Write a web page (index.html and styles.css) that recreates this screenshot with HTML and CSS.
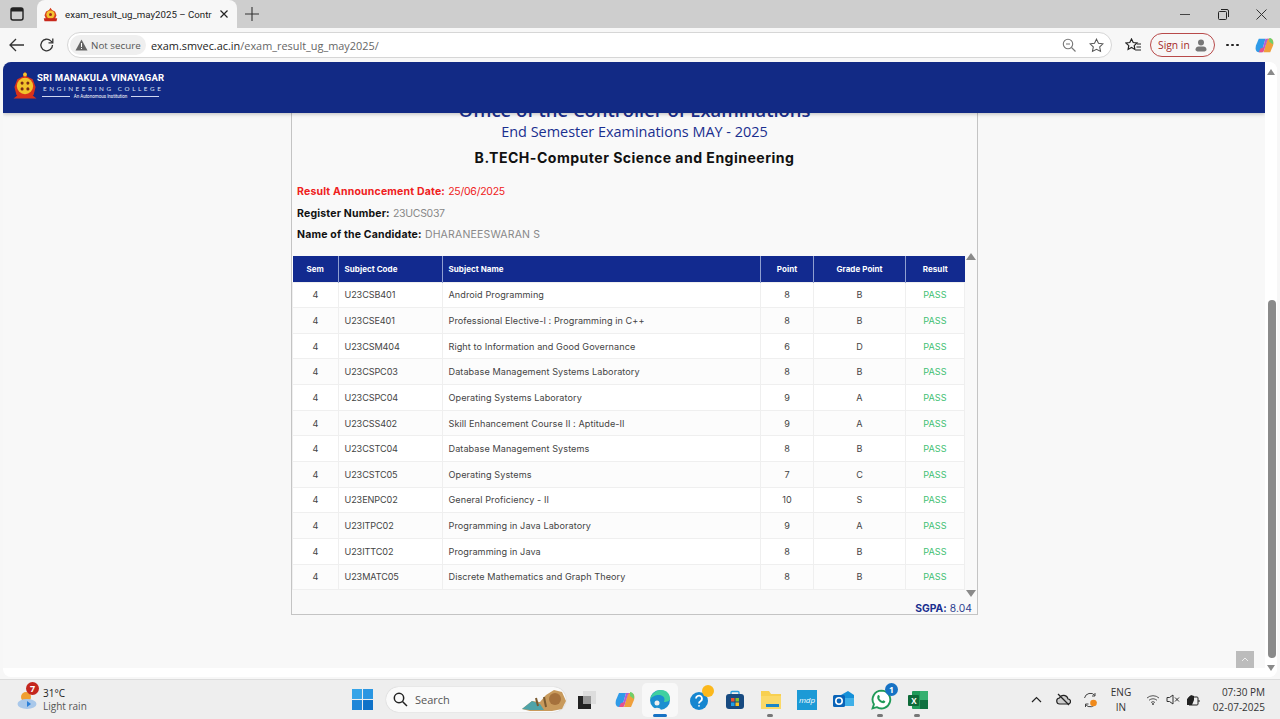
FILE: index.html
```html
<!DOCTYPE html>
<html lang="en">
<head>
<meta charset="utf-8">
<title>exam_result_ug_may2025</title>
<link rel="stylesheet" href="styles.css">
</head>
<body>
<div class="window">
  <div class="tabstrip">
    <svg class="tab-actions" width="16" height="16" viewBox="0 0 16 16"><rect x="2" y="2" width="12" height="12" rx="2" fill="none" stroke="#222" stroke-width="1.4"/><rect x="2" y="2" width="12" height="3.5" fill="#222"/></svg>
    <div class="tab">
      <svg class="favicon" width="15" height="15" viewBox="0 0 20 20"><path d="M10 1l2 3 4 2 2 5-2 5H4l-2-5 2-5 4-2z" fill="#d8401c"/><circle cx="10" cy="10" r="5.500" fill="#f4c430"/><circle cx="10" cy="10" r="2" fill="#a6281a"/><path d="M1 15h18l-1 4H2z" fill="#c8281c"/></svg>
      <span class="tab-title">exam_result_ug_may2025 – Contr</span>
      <svg width="10" height="10" viewBox="0 0 10 10"><path d="M1.500 1.500l7 7M8.500 1.500l-7 7" stroke="#222" stroke-width="1.200"/></svg>
    </div>
    <svg class="plus" width="14" height="14" viewBox="0 0 14 14"><path d="M7 0v14M0 7h14" stroke="#333" stroke-width="1.100"/></svg>
    <div class="win-controls">
      <svg width="11" height="11" viewBox="0 0 11 11"><path d="M0 5.500h10" stroke="#444"/></svg>
      <svg width="11" height="11" viewBox="0 0 11 11"><rect x=".5" y="2.500" width="8" height="8" rx="1" fill="none" stroke="#222"/><path d="M3 .5h6a1.500 1.500 0 0 1 1.500 1.500v6" fill="none" stroke="#222"/></svg>
      <svg width="11" height="11" viewBox="0 0 11 11"><path d="M.5.5l10 10M10.500.5l-10 10" stroke="#333"/></svg>
    </div>
  </div>

  <div class="toolbar">
    <svg class="nav-back" width="16" height="14" viewBox="0 0 16 14"><path d="M7 1L1 7l6 6M1 7h14" fill="none" stroke="#333" stroke-width="1.300"/></svg>
    <svg class="nav-reload" width="16" height="16" viewBox="0 0 16 16"><path d="M13.500 8a5.800 5.800 0 1 1-1.700-4.100L13.500 5.500" fill="none" stroke="#333" stroke-width="1.300"/><path d="M13.800 1.500v4.300H9.500" fill="none" stroke="#333" stroke-width="1.300"/></svg>
    <div class="omnibox">
      <div class="chip">
        <svg width="13" height="12" viewBox="0 0 13 12"><path d="M6.500.5l6 11H.5z" fill="#666"/><path d="M6.500 4v4M6.500 9v1" stroke="#fff"/></svg>
        <span>Not secure</span>
      </div>
      <div class="url"><span class="url-host">exam.smvec.ac.in</span>/exam_result_ug_may2025/</div>
      <svg class="omni-zoom" width="14" height="14" viewBox="0 0 14 14"><circle cx="6" cy="6" r="4.700" fill="none" stroke="#777" stroke-width="1.100"/><path d="M9.500 9.500l4 4M4 6h4" stroke="#777" stroke-width="1.100"/></svg>
      <svg class="omni-star" width="15" height="15" viewBox="0 0 16 16"><path d="M8 1.200l2.100 4.400 4.800.6-3.500 3.300.9 4.800L8 12l-4.300 2.300.9-4.800L1.100 6.200l4.800-.6z" fill="none" stroke="#555" stroke-width="1.100"/></svg>
    </div>
    <svg class="fav-list" width="17" height="15" viewBox="0 0 17 15"><path d="M6.500 1l1.700 3.500 3.800.5-2.800 2.600.7 3.800-3.400-1.900-3.400 1.900.7-3.800L1 5l3.800-.5z" fill="none" stroke="#222" stroke-width="1.200"/><path d="M12 6h4M11.500 9h4.500M10.500 12h5.500" stroke="#222" stroke-width="1.100"/></svg>
    <div class="signin">
      <span>Sign in</span>
      <svg width="12" height="13" viewBox="0 0 12 13"><circle cx="6" cy="3.500" r="3" fill="#777"/><path d="M.5 10.500c0-2 1.500-3 3-3h5c1.500 0 3 1 3 3 0 1.500-1.500 2-3 2h-5c-1.500 0-3-.5-3-2z" fill="#777"/></svg>
    </div>
    <div class="more"><i></i><i></i><i></i></div>
    <svg class="copilot" width="19" height="19" viewBox="0 0 20 20"><path d="M4 3h7L7 17H4C1 17 0 14 1 10z" fill="#2f9be8"/><path d="M16 17H9l4-14h3c3 0 4 3 3 7z" fill="#f0a03c"/><path d="M11 3h4c-1 0-2 1-2.500 3L9.500 15c-.5 1.500-1.500 2-2.500 2z" fill="#b65fd0"/><path d="M15 2c3 0 4.500 3 4 7l-4-3z" fill="#6fcf6a"/><path d="M6 13l4-1-1.500 5H4z" fill="#e8508c"/></svg>
  </div>

  <div class="viewport">
    <div class="site">
      <header class="site-header">
        <svg width="24" height="30" viewBox="0 0 25 30"><path d="M12.500 0l2 5 6 3 3 8-2 8-1 1 4 3H.5l4-3-1-1-2-8 3-8 6-3z" fill="#d8321c"/><circle cx="12.500" cy="15" r="8.500" fill="#f2c32c"/><circle cx="9.500" cy="12" r="1.600" fill="#7a2a14"/><circle cx="15.500" cy="12" r="1.600" fill="#7a2a14"/><circle cx="9.500" cy="18" r="1.600" fill="#7a2a14"/><circle cx="15.500" cy="18" r="1.600" fill="#7a2a14"/><circle cx="12.500" cy="3" r="2" fill="#f2c32c"/></svg>
        <div class="brand">
          <div class="brand-name">SRI MANAKULA VINAYAGAR</div>
          <div class="brand-sub">ENGINEERING COLLEGE</div>
          <div class="brand-tag"><span>An Autonomous Institution</span></div>
        </div>
      </header>
      <main class="page">
        <section class="panel">
          <h1>Office of the Controller of Examinations</h1>
          <h2>End Semester Examinations MAY - 2025</h2>
          <h3>B.TECH-Computer Science and Engineering</h3>
          <p class="meta meta-red"><b>Result Announcement Date:</b> <em>25/06/2025</em></p>
          <p class="meta"><b>Register Number:</b> <span class="reg">23UCS037</span></p>
          <p class="meta meta-name"><b>Name of the Candidate:</b> <span>DHARANEESWARAN S</span></p>
          <div class="table-wrap">
            <table>
              <colgroup><col class="c1"><col class="c2"><col class="c3"><col class="c4"><col class="c5"><col class="c6"></colgroup>
              <thead><tr><th>Sem</th><th class="left">Subject Code</th><th class="left">Subject Name</th><th>Point</th><th>Grade Point</th><th>Result</th></tr></thead>
              <tbody>
                <tr><td>4</td><td class="left code">U23CSB401</td><td class="left">Android Programming</td><td>8</td><td>B</td><td class="pass">PASS</td></tr>
                <tr><td>4</td><td class="left code">U23CSE401</td><td class="left">Professional Elective-I : Programming in C++</td><td>8</td><td>B</td><td class="pass">PASS</td></tr>
                <tr><td>4</td><td class="left code">U23CSM404</td><td class="left">Right to Information and Good Governance</td><td>6</td><td>D</td><td class="pass">PASS</td></tr>
                <tr><td>4</td><td class="left code">U23CSPC03</td><td class="left">Database Management Systems Laboratory</td><td>8</td><td>B</td><td class="pass">PASS</td></tr>
                <tr><td>4</td><td class="left code">U23CSPC04</td><td class="left">Operating Systems Laboratory</td><td>9</td><td>A</td><td class="pass">PASS</td></tr>
                <tr><td>4</td><td class="left code">U23CSS402</td><td class="left">Skill Enhancement Course II : Aptitude-II</td><td>9</td><td>A</td><td class="pass">PASS</td></tr>
                <tr><td>4</td><td class="left code">U23CSTC04</td><td class="left">Database Management Systems</td><td>8</td><td>B</td><td class="pass">PASS</td></tr>
                <tr><td>4</td><td class="left code">U23CSTC05</td><td class="left">Operating Systems</td><td>7</td><td>C</td><td class="pass">PASS</td></tr>
                <tr><td>4</td><td class="left code">U23ENPC02</td><td class="left">General Proficiency - II</td><td>10</td><td>S</td><td class="pass">PASS</td></tr>
                <tr><td>4</td><td class="left code">U23ITPC02</td><td class="left">Programming in Java Laboratory</td><td>9</td><td>A</td><td class="pass">PASS</td></tr>
                <tr><td>4</td><td class="left code">U23ITTC02</td><td class="left">Programming in Java</td><td>8</td><td>B</td><td class="pass">PASS</td></tr>
                <tr><td>4</td><td class="left code">U23MATC05</td><td class="left">Discrete Mathematics and Graph Theory</td><td>8</td><td>B</td><td class="pass">PASS</td></tr>
              </tbody>
            </table>
            <div class="mini-scroll"><i class="up"></i><i class="down"></i></div>
          </div>
          <p class="sgpa"><b>SGPA:</b> 8.04</p>
        </section>
        <div class="to-top"><svg width="8" height="5" viewBox="0 0 8 5"><path d="M1 4l3-3 3 3" fill="none" stroke="#eee"/></svg></div>
      </main>
    </div>
    <div class="scrollbar"><i class="up"></i><div class="thumb"></div><i class="down"></i></div>
  </div>

  <footer class="taskbar">
    <div class="weather">
      <svg class="weather-icon" width="22" height="22" viewBox="0 0 22 22"><circle cx="10" cy="8" r="5" fill="#f0a030"/><ellipse cx="11" cy="15" rx="9.500" ry="5" fill="#a9c8ea"/><path d="M11 12l4 3-4 3z" fill="#2a7fd8"/></svg>
      <span class="badge-red">7</span>
      <div class="weather-text"><div>31°C</div><div class="dim">Light rain</div></div>
    </div>
    <div class="tb-center">
      <svg width="21" height="21" viewBox="0 0 20 20"><rect width="9.500" height="9.500" fill="#35a4e8"/><rect x="10.500" width="9.500" height="9.500" fill="#2a96e2"/><rect y="10.500" width="9.500" height="9.500" fill="#1f86d8"/><rect x="10.500" y="10.500" width="9.500" height="9.500" fill="#0f72c8"/></svg>
      <div class="search">
        <svg width="15" height="15" viewBox="0 0 15 15"><circle cx="6" cy="6" r="4.700" fill="none" stroke="#222" stroke-width="1.500"/><path d="M9.500 9.500l4.500 4.500" stroke="#222" stroke-width="1.500"/></svg>
        <span>Search</span>
        <svg class="search-art" width="44" height="22" viewBox="0 0 44 22"><path d="M0 20l10-8 8 1 6-7 8-5 8 2 4 9-4 8-10 2H8z" fill="#c89a5c"/><path d="M0 20l10-8 8 3 4 6H8z" fill="#4fa3a8"/><circle cx="33" cy="10" r="6" fill="#a5713c"/><path d="M14 9l2 8M22 8l2 10" stroke="#7a5a30" stroke-width="2"/></svg>
      </div>
      <svg class="app" width="20" height="20" viewBox="0 0 20 20"><rect x="6" y="1" width="13" height="13" fill="#ddd"/><rect x="1" y="6" width="13" height="13" fill="#222"/><rect x="6" y="6" width="8" height="8" fill="#999"/></svg>
      <svg class="app app-copilot" width="20" height="20" viewBox="0 0 20 20"><path d="M4 3h7L7 17H4C1 17 0 14 1 10z" fill="#2f9be8"/><path d="M16 17H9l4-14h3c3 0 4 3 3 7z" fill="#f0a03c"/><path d="M11 3h4c-1 0-2 1-2.500 3L9.500 15c-.5 1.500-1.500 2-2.500 2z" fill="#b65fd0"/><path d="M15 2c3 0 4.500 3 4 7l-4-3z" fill="#6fcf6a"/><path d="M6 13l4-1-1.500 5H4z" fill="#e8508c"/></svg>
      <div class="active-app"><svg width="22" height="22" viewBox="0 0 22 22"><circle cx="11" cy="11" r="10" fill="#1b8fd0"/><path d="M1 11C2 4 8 1 12 1c6 0 9 4 9 9 0 2-3 3-6 3 2-5-2-7-5-7-4 0-8 2-9 5z" fill="#3fd0a0"/><circle cx="8" cy="14" r="2.500" fill="#eee"/><path d="M4 21c1-3 7-3 8 0z" fill="#eee"/></svg><i></i></div>
      <div class="app-badge"><svg width="20" height="20" viewBox="0 0 20 20"><circle cx="10" cy="11" r="9" fill="#1586d0"/><path d="M7 8.500a3 3 0 1 1 4.500 2.700c-1 .6-1.500 1.200-1.500 2.300M10 15.200v1.300" fill="none" stroke="#fff" stroke-width="1.800"/></svg><b class="dot"></b></div>
      <svg class="app" width="20" height="20" viewBox="0 0 20 20"><rect x="1" y="4" width="18" height="15" rx="3" fill="#174a80"/><path d="M6 4V2.500a1 1 0 0 1 1-1h6a1 1 0 0 1 1 1V4" fill="none" stroke="#2aa0e0" stroke-width="1.300"/><rect x="6" y="8" width="3.500" height="3.500" fill="#f05030"/><rect x="10.500" y="8" width="3.500" height="3.500" fill="#80c030"/><rect x="6" y="12.500" width="3.500" height="3.500" fill="#20a0e8"/><rect x="10.500" y="12.500" width="3.500" height="3.500" fill="#f8c020"/></svg>
      <div class="app-pin"><svg width="20" height="20" viewBox="0 0 20 20"><path d="M0 1h8l2 3h10v15H0z" fill="#f8d050"/><rect y="6" width="20" height="13" fill="#fbd968"/><rect x="5" y="14" width="13" height="3" fill="#1c86c8"/></svg><i></i></div>
      <div class="mdp">mdp</div>
      <svg class="app" width="21" height="20" viewBox="0 0 21 20"><path d="M8 5l7-4 6 4v10H8z" fill="#1590d8"/><path d="M8 8h13v8H8z" fill="#3fb0e8"/><rect y="5" width="12" height="12" rx="1.500" fill="#0a64b8"/><circle cx="6" cy="11" r="3.200" fill="none" stroke="#fff" stroke-width="1.600"/></svg>
      <div class="app-pin whats"><svg width="21" height="21" viewBox="0 0 20 20"><path d="M10 1.500a8.500 8.500 0 0 0-7.200 13L1.500 18.500l4-1.200A8.500 8.500 0 1 0 10 1.500z" fill="#fff" stroke="#1f9a58" stroke-width="1.800"/><path d="M6.500 6c1-1 1.500 0 2 1.500l-.7 1c.6 1.200 1.500 2.200 3 3l1-.8c1.500.6 2.300 1 1.600 2-1 1.500-3.300 1-5.400-.7C6 10.500 5.300 7.500 6.500 6z" fill="#1f9a58"/></svg><span class="badge-blue">1</span><i></i></div>
      <div class="app-pin"><svg width="20" height="20" viewBox="0 0 20 20"><rect x="4" y="1" width="16" height="18" rx="1" fill="#1f9a58"/><rect x="12" y="1" width="8" height="9" fill="#36b070"/><rect x="12" y="10" width="8" height="9" fill="#107040"/><rect y="5" width="11" height="11" rx="1" fill="#0e6a38"/></svg><span class="xl">X</span><i></i></div>
    </div>
    <div class="tray">
      <svg width="11" height="7" viewBox="0 0 11 7"><path d="M1 6l4.500-4.500L10 6" fill="none" stroke="#222" stroke-width="1.200"/></svg>
      <svg class="t-cloud" width="15" height="13" viewBox="0 0 15 13"><path d="M4 11a3 3 0 0 1-.5-6 4.500 4.500 0 0 1 8.500 1 2.500 2.500 0 0 1 0 5z" fill="#ccc" stroke="#222" stroke-width="1.200"/><path d="M2 1l11 11" stroke="#222" stroke-width="1.200"/></svg>
      <svg class="t-sync" width="15" height="16" viewBox="0 0 15 16"><path d="M1.500 6A6 6 0 0 1 12 3.500M13 10.500A6 6 0 0 1 2.500 12.500" fill="none" stroke="#444"/><path d="M12 1v3H9M2.500 15v-3h3" fill="none" stroke="#444"/><circle cx="10.500" cy="11" r="3.300" fill="#f08a1c"/></svg>
      <div class="lang"><div>ENG</div><div>IN</div></div>
      <svg class="t-wifi" width="14" height="11" viewBox="0 0 14 11"><path d="M1 4a9 9 0 0 1 12 0M3 6.300a6 6 0 0 1 8 0M5 8.500a3 3 0 0 1 4 0" fill="none" stroke="#555"/><circle cx="7" cy="10" r=".9" fill="#333"/></svg>
      <svg class="t-vol" width="14" height="11" viewBox="0 0 14 11"><path d="M1 3.500h2.500L7 1v9L3.500 7.500H1z" fill="none" stroke="#333"/><path d="M9 3.500l4 4M13 3.500l-4 4" stroke="#333"/></svg>
      <svg class="t-bat" width="14" height="12" viewBox="0 0 14 12"><path d="M3 3h8a1 1 0 0 1 1 1v6a1 1 0 0 1-1 1H3z" fill="none" stroke="#222"/><path d="M1 11V5l4-4 3 1v4l-2 5z" fill="#222"/><path d="M13 6v2" stroke="#222"/></svg>
      <div class="clock"><div>07:30 PM</div><div>02-07-2025</div></div>
    </div>
  </footer>
</div>
</body>
</html>
```

FILE: styles.css
```css
* { box-sizing: border-box; }
html, body { margin: 0; height: 100%; overflow: hidden; }
body { font-family: "Open Sans", "Noto Sans", sans-serif; }
svg { display: block; flex: none; }
p, h1, h2, h3 { margin: 0; }

.window { width: 1280px; height: 719px; display: flex; flex-direction: column; background: #f7f7f7; }

/* tab strip */
.tabstrip { height: 28px; background: #cecece; display: flex; align-items: center; padding-left: 9px; flex: none; }
.tab { width: 200px; height: 28px; margin-left: 12px; background: #f7f7f7; border-radius: 8px 8px 0 0; display: flex; align-items: center; padding: 0 9px 0 6px; }
.tab-title { font-family: "Roboto", sans-serif; font-size: 9.700px; color: #222; margin-left: 7px; width: 150px; white-space: nowrap; margin-right: 7px; }
.plus { margin-left: 8px; }
.win-controls { margin-left: auto; display: flex; align-items: center; gap: 27px; padding-right: 13px; }

/* toolbar */
.toolbar { height: 34px; display: flex; align-items: center; padding-left: 9px; flex: none; }
.nav-reload { margin-left: 14px; }
.omnibox { width: 1045px; height: 26px; margin-left: 12px; background: #fff; border: 1px solid #d6d6d6; border-radius: 13px; display: flex; align-items: center; padding-left: 2px; }
.chip { height: 20px; width: 76px; background: #efefef; border-radius: 10px; display: flex; align-items: center; gap: 3px; padding-left: 5px; font-size: 9.800px; color: #555; white-space: nowrap; }
.url { font-size: 10.900px; color: #666; margin-left: 5px; }
.url-host { color: #1c1c1c; }
.omni-zoom { margin-left: auto; }
.omni-star { margin: 0 7px 0 13px; }
.fav-list { margin-left: 13px; }
.signin { width: 65px; height: 24px; margin-left: 8px; border: 1px solid #b84a4a; border-radius: 12px; display: flex; align-items: center; justify-content: space-between; padding: 0 7px 0 7px; font-size: 10.300px; color: #a52a2a; }
.more { display: flex; gap: 2.500px; margin-left: 11px; }
.more i { width: 2.500px; height: 2.500px; border-radius: 50%; background: #222; }
.copilot { margin-left: 16px; }

/* browser viewport */
.viewport { height: 615px; margin: 0 3px; background: #fff; border-radius: 8px; display: flex; overflow: hidden; flex: none; }
.site { width: 1262px; display: flex; flex-direction: column; position: relative; overflow: hidden; }
.site-header { position: absolute; top: 0; left: 0; right: 0; height: 51px; z-index: 2; background: #122a85; box-shadow: 0 1px 4px rgba(0,0,0,.25); display: flex; align-items: center; padding: 0 0 4px 10px; color: #fff; }
.brand { margin-left: 0; }
.brand-name { font-family: "Roboto", sans-serif; font-weight: 700; font-size: 9.500px; line-height: 11px; white-space: nowrap; letter-spacing: .18px; }
.brand-sub { font-family: "Lato", sans-serif; font-size: 6.300px; line-height: 9px; letter-spacing: 2.600px; margin-left: 6px; margin-top: 1px; white-space: nowrap; color: #dfe4f5; }
.brand-tag { font-family: "Roboto", sans-serif; font-size: 4.500px; line-height: 7px; display: flex; align-items: center; justify-content: center; width: 117px; margin-left: 5px; gap: 4px; white-space: nowrap; }
.brand-tag::before, .brand-tag::after { content: ""; flex: 1; height: 1px; background: #cfd6f0; }

.page { height: 606px; background: #f8f8f8; position: relative; overflow: hidden; flex: none; }
.panel { width: 687px; height: 531px; margin: 22px 0 0 288px; padding-top: 16px; border: 1px solid #c4c4c4; border-top: 0; background: #f9f9f9; font-family: "Inter", sans-serif; }
.panel h1 { font: 600 18.400px/20px "Open Sans", sans-serif; color: #1a2f8f; text-align: center; }
.panel h2 { font: 500 14.450px/18px "Open Sans", sans-serif; color: #1a2f8f; text-align: center; margin-top: 3px; }
.panel h3 { font: 700 14.100px/18px "Inter", sans-serif; color: #111; text-align: center; margin-top: 8px; letter-spacing: .46px; }
.meta { font-size: 10.500px; line-height: 14px; margin: 8px 0 0 5px; color: #111; letter-spacing: .18px; }
.meta b { font-weight: 700; }
.meta span { color: #888; font-weight: 400; }
.meta em { font-style: normal; letter-spacing: -.25px; }
.meta .reg { letter-spacing: -.3px; }
.meta-red { color: #ef2020; }
.meta-name { margin-top: 7px; }
.panel h3 + .meta { margin-top: 18px; }

.table-wrap { display: flex; align-items: flex-start; margin: 14px 0 0 0; }
table { width: 672px; height: 334px; table-layout: fixed; border-collapse: collapse; background: #fff; flex: none; }
.c1 { width: 46px; } .c2 { width: 104px; } .c3 { width: 318px; } .c4 { width: 53px; } .c5 { width: 92px; } .c6 { width: 59px; }
th { height: 26px; background: #122a8f; color: #fff; font-size: 8px; font-weight: 700; text-align: center; border-right: 1px solid #8f9fd0; padding: 0; letter-spacing: .05px; }
th:last-child { border-right: 0; }
td { height: 25.650px; border: 1px solid #efefef; font-size: 9.100px; font-weight: 400; color: #444; text-align: center; padding: 0; letter-spacing: .08px; white-space: nowrap; }
tbody tr:nth-child(even) td { background: #fcfcfc; }
th.left, td.left { text-align: left; padding-left: 5.500px; }
td.code { letter-spacing: -.1px; }
td.pass { color: #3fbf73; }
.mini-scroll { flex: none; width: 11px; margin-top: -3px; display: flex; flex-direction: column; justify-content: space-between; align-items: center; height: 344px; }
.up { width: 0; height: 0; border: 5px solid transparent; border-top: 0; border-bottom: 7px solid #8a8a8a; }
.down { width: 0; height: 0; border: 5px solid transparent; border-bottom: 0; border-top: 7px solid #8a8a8a; }
.sgpa { text-align: right; font-size: 10.300px; line-height: 14px; color: #2f4390; padding-right: 5px; margin-top: 4px; letter-spacing: .05px; }
.sgpa b { font-weight: 700; color: #1a2f8f; }
.to-top { position: absolute; left: 1233px; top: 589px; width: 18px; height: 17px; background: #bcbcbc; display: flex; align-items: center; justify-content: center; }

.scrollbar { width: 12px; flex: none; display: flex; flex-direction: column; align-items: center; padding: 7px 0 6px; background: #fff; }
.thumb { width: 8px; height: 358px; margin: 225px 0 auto 1px; border-radius: 4px; background: #8a8a8a; }
.scrollbar .up { border-left-width: 4.500px; border-right-width: 4.500px; border-bottom-width: 6px; }
.scrollbar .down { border-left-width: 4.500px; border-right-width: 4.500px; border-top-width: 6px; }

/* taskbar */
.taskbar { height: 40px; margin-top: 2px; border-top: 1px solid #dcdcdc; background: #eeeeee; display: flex; align-items: center; position: relative; flex: none; }
.weather { width: 352px; display: flex; align-items: center; padding-left: 16px; position: relative; font-size: 10px; color: #222; line-height: 13px; flex: none; }
.weather-text { margin-left: 5px; }
.dim { color: #555; }
.badge-red { position: absolute; left: 26px; top: -5px; width: 13px; height: 13px; border-radius: 50%; background: #c4261d; color: #fff; font: 700 9px/13px "Open Sans", sans-serif; text-align: center; }
.tb-center { display: flex; align-items: center; width: 584px; flex: none; }
.search { width: 180px; height: 25px; margin-left: 13px; background: #fafafa; border-radius: 13px; display: flex; align-items: center; padding-left: 7px; font-size: 11px; color: #555; box-shadow: 0 0 1px rgba(0,0,0,.25); }
.search span { margin-left: 7px; }
.search-art { margin-left: auto; }
.app { margin-left: 16px; }
.search + .app { margin-left: 11px; }
.app-copilot { margin-left: 18px; }
.active-app { width: 36px; height: 34px; margin-left: 7px; background: #f8f8f8; border-radius: 5px; display: flex; align-items: center; justify-content: center; position: relative; flex: none; }
.active-app i { position: absolute; bottom: 0; left: 11px; width: 14px; height: 3px; border-radius: 2px; background: #1672c4; }
.app-badge { position: relative; margin-left: 11px; }
.dot { position: absolute; right: -5px; top: -5px; width: 12px; height: 12px; border-radius: 50%; background: #fbb81c; }
.app-pin { position: relative; margin-left: 16px; }
.app-pin i { position: absolute; left: 6px; bottom: -7px; width: 6px; height: 3px; border-radius: 2px; background: #777; }
.mdp { width: 20px; height: 20px; margin-left: 16px; background: #1c9ad6; color: #fff; font: italic 8px/20px "Open Sans", sans-serif; text-align: center; flex: none; }
.whats { margin-left: 17px; }
.badge-blue { position: absolute; right: -6px; top: -6px; width: 13px; height: 13px; border-radius: 50%; background: #1672c4; color: #fff; font: 700 8.500px/13px "Open Sans", sans-serif; text-align: center; }
.xl { position: absolute; left: 2px; top: 5px; width: 8px; color: #fff; font: 700 8px/11px "Open Sans", sans-serif; text-align: center; }
.tray { display: flex; align-items: center; flex: 1; font-size: 10px; color: #333; line-height: 14px; padding-left: 95px; }
.t-cloud { margin-left: 14px; }
.t-sync { margin-left: 12px; }
.lang { width: 30px; margin-left: 8px; text-align: center; line-height: 15px; flex: none; font-size: 10px; }
.t-wifi { margin-left: 10px; }
.t-vol { margin-left: 6px; }
.t-bat { margin-left: 6px; }
.clock { margin-left: auto; padding-right: 15px; text-align: right; line-height: 14.500px; }
```
